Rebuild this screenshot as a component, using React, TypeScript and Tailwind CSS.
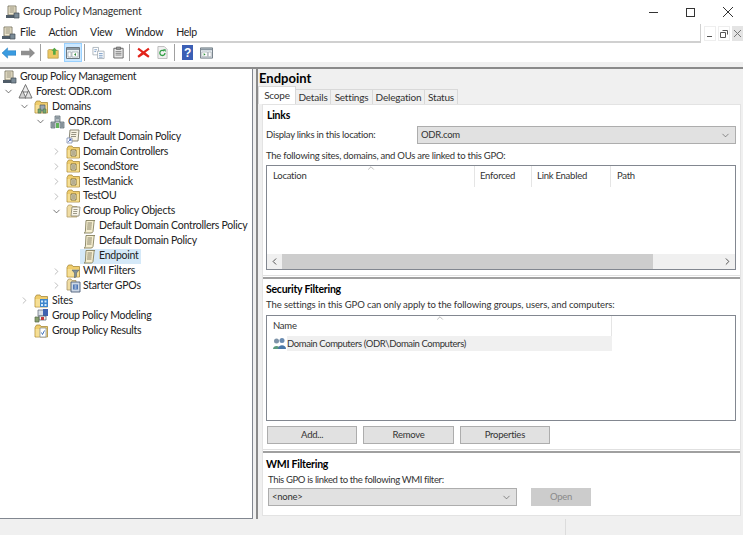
import { ChevronDown, ChevronRight, ChevronLeft, ChevronUp } from "lucide-react";
import type { ReactNode } from "react";

const INDENT = ["pl-[2px]", "pl-0", "pl-[16px]", "pl-[32px]", "pl-[48px]", "pl-[64px]"];

function Folder({ children }: { children?: ReactNode }) {
  return (
    <svg width="15" height="14" viewBox="0 0 15 14" className="shrink-0">
      <path d="M1 3.5V13h12.5V2.5H7L6 1H2.5L1 3.5z" fill="#f0cd6c" stroke="#a98c3c" strokeWidth="0.8" />
      <path d="M1.6 5H13v7.5H1.6z" fill="#f6df95" />
      {children}
    </svg>
  );
}

function ConsoleIcon() {
  return (
    <svg width="15" height="14" viewBox="0 0 15 14" className="shrink-0">
      <path d="M3 1h8v9H3z" fill="#f1ead2" stroke="#7c7662" strokeWidth="0.9" />
      <path d="M4.5 3h5M4.5 5h5M4.5 7h5" stroke="#7c7662" strokeWidth="0.8" />
      <path d="M1 10h9v3H1z" fill="#4f5c68" />
      <path d="M9 8h5v5H9z" fill="#7b8b97" stroke="#3f4a54" strokeWidth="0.7" />
    </svg>
  );
}

function ForestIcon() {
  return (
    <svg width="15" height="15" viewBox="0 0 15 15" className="shrink-0">
      <path d="M7.5 .5L11 8H4z" fill="#eeeeee" stroke="#666666" strokeWidth="0.9" />
      <path d="M4.5 6.5L8 14H1z" fill="#d0d0d0" stroke="#666666" strokeWidth="0.9" />
      <path d="M10.5 6.5L14 14H7z" fill="#e2e2e2" stroke="#666666" strokeWidth="0.9" />
    </svg>
  );
}

function DomainsIcon() {
  return (
    <Folder>
      <path d="M6 5h5v6H6z" fill="#9aa7b0" stroke="#4d5963" strokeWidth="0.7" />
      <path d="M4 9h3v4H4zM9 9h3v4H9z" fill="#74a86f" stroke="#4d6b50" strokeWidth="0.6" />
    </Folder>
  );
}

function DomainIcon() {
  return (
    <svg width="15" height="14" viewBox="0 0 15 14" className="shrink-0">
      <path d="M5 1h5v6H5z" fill="#b5bec4" stroke="#55616b" strokeWidth="0.7" />
      <path d="M1 7h4v6H1zM10 7h4v6h-4z" fill="#aab4ba" stroke="#55616b" strokeWidth="0.7" />
      <path d="M6 8h3v5H6z" fill="#62b35b" />
      <path d="M2 9h2M11 9h2M2 11h2M11 11h2M6 3h3" stroke="#50606b" strokeWidth="0.8" />
    </svg>
  );
}

function LinkedGpoIcon() {
  return (
    <svg width="15" height="15" viewBox="0 0 15 15" className="shrink-0">
      <path d="M4 1h9l-1 11H3z" fill="#f7f3e3" stroke="#7d7a68" strokeWidth="0.9" />
      <path d="M5.5 3.5h5M5.2 5.5h5M5 7.5h5" stroke="#7d7a68" strokeWidth="0.8" />
      <path d="M1 9h5v5H1z" fill="#ffffff" stroke="#6d7ea8" strokeWidth="0.7" />
      <path d="M2.2 12.8L4.8 10.2M3 10.2h1.8V12" stroke="#2b52b0" strokeWidth="0.8" fill="none" />
    </svg>
  );
}

function OuIcon() {
  return (
    <Folder>
      <path d="M5 5h5v6H5z" fill="#fff9e2" stroke="#5f5428" strokeWidth="0.8" />
      <path d="M6 7h3M6 9h3" stroke="#5f5428" strokeWidth="0.9" />
    </Folder>
  );
}

function GpoFolderIcon() {
  return (
    <svg width="15" height="14" viewBox="0 0 15 14" className="shrink-0">
      <path d="M1 3.5V13h10V2.5H6.5L5.5 1H2.5L1 3.5z" fill="#f0dda4" stroke="#b49f69" strokeWidth="0.8" />
      <path d="M6 3h8l-1 9H5z" fill="#f8f5ea" stroke="#85826f" strokeWidth="0.8" />
      <path d="M7.5 5.5h4M7.2 7.5h4M7 9.5h4" stroke="#85826f" strokeWidth="0.8" />
    </svg>
  );
}

function ScrollIcon() {
  return (
    <svg width="15" height="15" viewBox="0 0 15 15" className="shrink-0">
      <path d="M4 1.5h9c-1 .5-1 1-1 2l-1 9c-.2 1-1 1.5-2 1.5H2c1-.3 1.3-1 1.4-2z" fill="#f6eecf" stroke="#85805f" strokeWidth="0.9" />
      <path d="M5.5 4h4.5M5.3 6h4.5M5.1 8h4.5M4.9 10h4.5" stroke="#6f6b54" strokeWidth="0.8" />
    </svg>
  );
}

function WmiIcon() {
  return (
    <Folder>
      <path d="M6 6h7l-2.5 3v3.5L8.5 14V9z" fill="#7f8e99" stroke="#4c5963" strokeWidth="0.5" />
    </Folder>
  );
}

function StarterIcon() {
  return (
    <svg width="15" height="15" viewBox="0 0 15 15" className="shrink-0">
      <path d="M1 3.5V12h9V2.5H6L5 1H2.5L1 3.5z" fill="#f0dda4" stroke="#a89668" strokeWidth="0.8" />
      <path d="M5 4h9v10H5z" fill="#cdd8e6" stroke="#4d5d78" strokeWidth="0.9" />
      <path d="M7 6.5h5v5H7z" fill="#4f78b7" />
      <path d="M8.5 8h2M8.5 10h2" stroke="#ffffff" strokeWidth="0.8" />
    </svg>
  );
}

function SitesIcon() {
  return (
    <Folder>
      <path d="M6 5h8v8H6z" fill="#3f86cc" />
      <path d="M7 6.5h2v2H7zM10.5 6.5h2v2h-2zM7 10h2v2H7zM10.5 10h2v2h-2z" fill="#d4ecff" />
    </Folder>
  );
}

function ModelingIcon() {
  return (
    <svg width="15" height="15" viewBox="0 0 15 15" className="shrink-0">
      <path d="M4 2h6v6H4z" fill="#d8dee6" stroke="#5b6674" strokeWidth="0.7" />
      <path d="M9 1h5v7H9z" fill="#3f62b0" />
      <path d="M5 8h7v4H5z" fill="#f2f2f2" stroke="#4b5666" strokeWidth="0.7" />
      <path d="M1 9h4v5H1z" fill="#87a06e" stroke="#56684a" strokeWidth="0.7" />
      <path d="M7 9h3v3H7z" fill="#c33a3a" />
    </svg>
  );
}

function ResultsIcon() {
  return (
    <Folder>
      <path d="M6 4h6v9H6z" fill="#ffffff" stroke="#7a8794" strokeWidth="0.7" />
      <path d="M7.5 8.5l1 2 2-4" stroke="#2b63b5" strokeWidth="0.9" fill="none" />
    </Folder>
  );
}

type Node = { label: string; level: number; icon: ReactNode; arrow?: "open" | "closed"; selected?: boolean };

const TREE: Node[] = [
  { label: "Group Policy Management", level: 0, icon: <ConsoleIcon /> },
  { label: "Forest: ODR.com", level: 1, icon: <ForestIcon />, arrow: "open" },
  { label: "Domains", level: 2, icon: <DomainsIcon />, arrow: "open" },
  { label: "ODR.com", level: 3, icon: <DomainIcon />, arrow: "open" },
  { label: "Default Domain Policy", level: 4, icon: <LinkedGpoIcon /> },
  { label: "Domain Controllers", level: 4, icon: <OuIcon />, arrow: "closed" },
  { label: "SecondStore", level: 4, icon: <OuIcon />, arrow: "closed" },
  { label: "TestManick", level: 4, icon: <OuIcon />, arrow: "closed" },
  { label: "TestOU", level: 4, icon: <OuIcon />, arrow: "closed" },
  { label: "Group Policy Objects", level: 4, icon: <GpoFolderIcon />, arrow: "open" },
  { label: "Default Domain Controllers Policy", level: 5, icon: <ScrollIcon /> },
  { label: "Default Domain Policy", level: 5, icon: <ScrollIcon /> },
  { label: "Endpoint", level: 5, icon: <ScrollIcon />, selected: true },
  { label: "WMI Filters", level: 4, icon: <WmiIcon />, arrow: "closed" },
  { label: "Starter GPOs", level: 4, icon: <StarterIcon />, arrow: "closed" },
  { label: "Sites", level: 2, icon: <SitesIcon />, arrow: "closed" },
  { label: "Group Policy Modeling", level: 2, icon: <ModelingIcon /> },
  { label: "Group Policy Results", level: 2, icon: <ResultsIcon /> },
];

function TreeRow({ node }: { node: Node }) {
  return (
    <div className={`flex h-[14.95px] items-center whitespace-nowrap ${INDENT[node.level]}`}>
      {node.level > 0 && (
        <span className="flex w-[18px] shrink-0 items-center pl-[3px]">
          {node.arrow === "open" && <ChevronDown size={11} strokeWidth={1.6} className="text-[#444]" />}
          {node.arrow === "closed" && <ChevronRight size={11} strokeWidth={1.4} className="text-[#999]" />}
        </span>
      )}
      <span className={`flex h-[15px] items-center pr-[2px] ${node.selected ? "-ml-[2px] bg-[#d5e9f8] pl-[2px]" : ""}`}>
        {node.icon}
        <span className={`text-[#222] ${node.level >= 4 ? "ml-[2px]" : "ml-[3px]"}`}>{node.label}</span>
      </span>
    </div>
  );
}

function ToolSep({ className }: { className: string }) {
  return <span className={`h-[17px] w-px shrink-0 bg-[#a0a0a0] ${className}`} />;
}

function Toolbar() {
  return (
    <div className="flex h-[19px] shrink-0 items-center bg-white">
      <svg width="14" height="12" viewBox="0 0 15 12" className="ml-[2px] shrink-0"><path d="M0 6l6-5.5V3.5h9v5H6v3z" fill="#3a9be0" stroke="#2277b8" strokeWidth="0.5" /></svg>
      <svg width="14" height="12" viewBox="0 0 15 12" className="ml-[5px] shrink-0"><path d="M15 6L9 .5V3.5H0v5h9v3z" fill="#8f8f8f" /></svg>
      <ToolSep className="ml-[5px]" />
      <svg width="13" height="14" viewBox="0 0 15 14" className="ml-[6px] shrink-0">
        <path d="M1 4v9h12V4H7L6 3H2z" fill="#edc862" stroke="#a98c3c" strokeWidth="0.7" />
        <path d="M7 9V4.5H5L8.5 1 12 4.5h-2V9z" fill="#54a844" />
      </svg>
      <span className="ml-[4px] flex h-[19px] w-[18px] shrink-0 items-center justify-center border border-[#99d1ff] bg-[#cce8ff]">
        <svg width="14" height="12" viewBox="0 0 14 12">
          <path d="M.5.5h13v11H.5z" fill="#e8eef2" stroke="#6c7780" />
          <path d="M1 1h12v2H1z" fill="#8b98a2" />
          <path d="M2 5h3v5H2zM6 5h6v5H6z" fill="#ffffff" stroke="#7a858e" strokeWidth="0.5" />
          <path d="M10 6v3L8 7.5z" fill="#2f8f3c" />
        </svg>
      </span>
      <ToolSep className="ml-[2px]" />
      <svg width="13" height="14" viewBox="0 0 14 14" className="ml-[7px] shrink-0">
        <path d="M1 1h6v8H1z" fill="#fff" stroke="#9aa3ab" strokeWidth="0.8" />
        <path d="M6 5h7v8H6z" fill="#fff" stroke="#9aa3ab" strokeWidth="0.8" />
        <path d="M2.5 3.5h3M2.5 5.5h2M7.5 7.5h4M7.5 9.5h4M7.5 11.5h4" stroke="#5a86b8" strokeWidth="0.8" />
      </svg>
      <svg width="11" height="15" viewBox="0 0 13 15" className="ml-[8px] shrink-0">
        <path d="M1 2.5h11V14H1z" fill="#e9e9e9" stroke="#555" />
        <path d="M4 1h5v3H4z" fill="#999" stroke="#555" strokeWidth="0.7" />
        <path d="M3 6.5h7M3 8.5h7M3 10.5h7" stroke="#777" />
      </svg>
      <ToolSep className="ml-[5px]" />
      <svg width="13" height="13" viewBox="0 0 15 14" className="ml-[7px] shrink-0">
        <path d="M2 1.5l5.5 4 5.5-4 1.5 2L9.7 7l4.8 4-1.5 2.2-5.5-4-5.5 4L.5 11l4.8-4L.5 3.5z" fill="#e2231a" />
      </svg>
      <svg width="11" height="15" viewBox="0 0 12 15" className="ml-[7px] shrink-0">
        <path d="M1 1h7l3 3v10H1z" fill="#f0f0f0" stroke="#aaa" strokeWidth="0.8" />
        <path d="M8.7 8a2.8 2.8 0 1 1-1-2.2" fill="none" stroke="#2f9e44" strokeWidth="1.4" />
        <path d="M6.5 4h3v3z" fill="#2f9e44" />
      </svg>
      <ToolSep className="ml-[6px]" />
      <span className="ml-[7px] flex h-[15px] w-[11px] shrink-0 items-center justify-center bg-[#3b5fb5] font-['Liberation_Sans',sans-serif] text-[12px] font-bold text-white">?</span>
      <svg width="13" height="12" viewBox="0 0 14 12" className="ml-[7px] shrink-0">
        <path d="M.5.5h13v11H.5z" fill="#e8eef2" stroke="#6c7780" />
        <path d="M1 1h12v2H1z" fill="#8b98a2" />
        <path d="M2 5h6v5H2zM9 5h3v5H9z" fill="#ffffff" stroke="#7a858e" strokeWidth="0.5" />
        <path d="M4 6v3l2-1.5z" fill="#2f8f3c" />
      </svg>
    </div>
  );
}

function Tabs() {
  return (
    <div className="-ml-[3px] flex h-[17px] items-end text-[10px] tracking-[-0.2px] text-[#333]">
      <span className="flex h-[18px] w-[38px] items-center justify-center border border-b-0 border-[#d9d9d9] bg-white">Scope</span>
      {["Details", "Settings", "Delegation", "Status"].map((t, i) => (
        <span
          key={t}
          className={`flex h-[15px] items-center justify-center border-r border-t border-[#d9d9d9] bg-[#f0f0f0] ${["w-[35px]", "w-[42px]", "w-[52px]", "w-[33px]"][i]}`}
        >
          {t}
        </span>
      ))}
    </div>
  );
}

function ComboBox({ text, className }: { text: string; className: string }) {
  return (
    <div className={`flex h-[18px] items-center justify-between border border-[#adadad] bg-[#e1e1e1] pl-[3px] pr-[4px] text-[#333] ${className}`}>
      <span>{text}</span>
      <ChevronDown size={11} strokeWidth={1.4} className="text-[#555]" />
    </div>
  );
}

function HeaderCell({ label, className }: { label: string; className: string }) {
  return <span className={`flex h-[21px] items-center border-r border-[#e5e5e5] text-[#333] ${className}`}>{label}</span>;
}

function Splitter() {
  return <div className="h-[4px] border-b-2 border-t border-b-[#a0a0a0] border-t-[#e0e0e0]" />;
}

function PushButton({ label }: { label: string }) {
  return (
    <button className="flex h-[18px] items-center justify-center border border-[#adadad] bg-[#e1e1e1] text-[#333]">{label}</button>
  );
}

function ScopePane() {
  return (
    <div className="ml-[1px] mr-[2px] flex h-[412px] flex-col border border-[#e3e3e3] bg-white text-[9.5px] tracking-[-0.25px]">
      <div className="px-[3px] pt-[3px]">
        <h3 className="h-[14px] pl-[1px] text-[10.5px] font-bold leading-[14px] text-black">Links</h3>
        <div className="mt-[4px] flex h-[18px] items-center">
          <span className="w-[151px] text-[#333]">Display links in this location:</span>
          <ComboBox text="ODR.com" className="w-[319px]" />
        </div>
        <p className="mt-[2px] h-[19px] leading-[19px] text-[#333]">The following sites, domains, and OUs are linked to this GPO:</p>
        <div className="relative flex h-[105px] w-[470px] flex-col border border-[#828790]">
          <ChevronUp size={10} strokeWidth={1.2} className="absolute left-[99px] top-[-3px] text-[#777]" />
          <div className="flex">
            <HeaderCell label="Location" className="w-[208px] pl-[6px]" />
            <HeaderCell label="Enforced" className="w-[57px] pl-[5px]" />
            <HeaderCell label="Link Enabled" className="w-[79px] pl-[5px]" />
            <span className="flex h-[21px] items-center pl-[6px] text-[#333]">Path</span>
          </div>
          <div className="flex-1" />
          <div className="flex h-[15px] items-center bg-[#f0f0f0]">
            <ChevronLeft size={11} strokeWidth={2} className="mx-[2px] text-[#444]" />
            <div className="h-full w-[371px] bg-[#cdcdcd]" />
            <div className="flex-1" />
            <ChevronRight size={11} strokeWidth={2} className="mx-[2px] text-[#444]" />
          </div>
        </div>
      </div>
      <div className="mt-[5px]"><Splitter /></div>
      <div className="px-[3px] pt-[2px]">
        <h3 className="h-[16px] text-[10.5px] font-bold leading-[16px] text-black">Security Filtering</h3>
        <p className="h-[16px] leading-[16px] tracking-[-0.1px] text-[#333]">The settings in this GPO can only apply to the following groups, users, and computers:</p>
        <div className="relative mt-[2px] h-[106px] w-[470px] border border-[#828790]">
          <ChevronUp size={10} strokeWidth={1.2} className="absolute left-[168px] top-[-3px] text-[#777]" />
          <div className="flex">
            <span className="flex h-[20px] w-[345px] items-center border-r border-[#e5e5e5] pl-[6px] text-[#333]">Name</span>
          </div>
          <div className="flex h-[15px] w-[345px] items-center whitespace-nowrap">
            <svg width="15" height="13" viewBox="0 0 15 13" className="ml-[5px] shrink-0">
              <circle cx="4.5" cy="4" r="2.5" fill="#7d93a8" />
              <path d="M1 12c0-4 7-4 7 0z" fill="#5b9a7e" />
              <circle cx="10" cy="3.5" r="2.5" fill="#6a8bb0" />
              <path d="M6 12c0-5 8-5 8 0z" fill="#4a78a8" />
            </svg>
            <span className="h-[15px] flex-1 bg-[#f0f0f0] leading-[15px] tracking-[-0.4px] text-[#333]">Domain Computers (ODR\Domain Computers)</span>
          </div>
        </div>
        <div className="mt-[5px] grid w-[284px] grid-cols-3 gap-[6px] pl-[1px]">
          <PushButton label="Add..." />
          <PushButton label="Remove" />
          <PushButton label="Properties" />
        </div>
      </div>
      <div className="mt-[5px]"><Splitter /></div>
      <div className="px-[3px] pt-[3px]">
        <h3 className="h-[16px] text-[10.5px] font-bold leading-[16px] text-black">WMI Filtering</h3>
        <p className="h-[15px] pl-[2px] leading-[15px] tracking-[-0.35px] text-[#333]">This GPO is linked to the following WMI filter:</p>
        <div className="mt-[1px] flex items-center pl-[2px]">
          <ComboBox text="<none>" className="w-[249px]" />
          <span className="ml-[14px] flex h-[18px] w-[60px] items-center justify-center bg-[#cccccc] text-[#8a8a8a]">Open</span>
        </div>
      </div>
    </div>
  );
}

export default function App() {
  return (
    <div className="flex h-[535px] w-[743px] flex-col overflow-hidden bg-[#f0f0f0] font-['Lato','Open_Sans',sans-serif] text-[10.5px] tracking-[-0.25px] text-[#333]">
      <div className="flex h-[24px] shrink-0 items-center justify-between bg-white pl-[5px]">
        <div className="flex items-center text-[10.5px] tracking-[-0.15px]">
          <ConsoleIcon />
          <span className="ml-[3px]">Group Policy Management</span>
        </div>
        <div className="flex items-center pr-[10px]">
          <span className="h-px w-[9px] bg-[#333]" />
          <span className="ml-[28px] h-[9px] w-[9px] border border-[#333]" />
          <svg width="10" height="10" viewBox="0 0 10 10" className="ml-[28px]"><path d="M0 0l10 10M10 0L0 10" stroke="#333" strokeWidth="1" /></svg>
        </div>
      </div>
      <div className="flex h-[19px] shrink-0 bg-white">
        <div className="flex flex-1 items-center border-b-2 border-[#d0d0d0] pl-[1px]">
          <ConsoleIcon />
          <nav className="ml-[4px] flex gap-[13px] text-[#222]">
            <span>File</span>
            <span>Action</span>
            <span>View</span>
            <span>Window</span>
            <span>Help</span>
          </nav>
        </div>
        <div className="flex w-[43px] shrink-0 items-center border-l border-[#d0d0d0] pl-[3px] text-[#555]">
          <span className="flex h-[15px] w-[12px] items-end justify-center border border-[#eeeeee] pb-[3px]"><span className="h-px w-[5px] bg-[#555]" /></span>
          <span className="ml-[2px] flex h-[15px] w-[13px] items-center justify-center border border-[#eeeeee]">
            <svg width="8" height="8" viewBox="0 0 8 8"><path d="M2.5.5h5v4M.5 2.5h5v5h-5z" fill="none" stroke="#555" /></svg>
          </span>
          <span className="ml-[2px] flex h-[15px] w-[11px] items-center justify-center bg-[#e4e4e4]">
            <svg width="7" height="7" viewBox="0 0 7 7"><path d="M0 0l7 7M7 0L0 7" stroke="#777" /></svg>
          </span>
        </div>
      </div>
      <Toolbar />
      <div className="h-[5px] shrink-0 bg-[#f0f0f0]" />
      <div className="flex h-[452px] shrink-0 border-t-2 border-[#8a8a8a]">
        <div className="h-full w-[253px] shrink-0 border-b border-r border-[#828790] bg-white pt-[0.4px]">
          {TREE.map((n, i) => (
            <TreeRow key={i} node={n} />
          ))}
        </div>
        <div className="ml-[3px] flex-1 border-l-2 border-[#8a8a8a] pl-[1px]">
          <h2 className="h-[18px] text-[13px] font-bold leading-[18px] tracking-normal text-black">Endpoint</h2>
          <div className="ml-[2px]">
            <Tabs />
            <ScopePane />
          </div>
        </div>
      </div>
      <div className="flex flex-1 justify-end">
        <span className="w-[178px] border-l border-[#dcdcdc]" />
      </div>
    </div>
  );
}
